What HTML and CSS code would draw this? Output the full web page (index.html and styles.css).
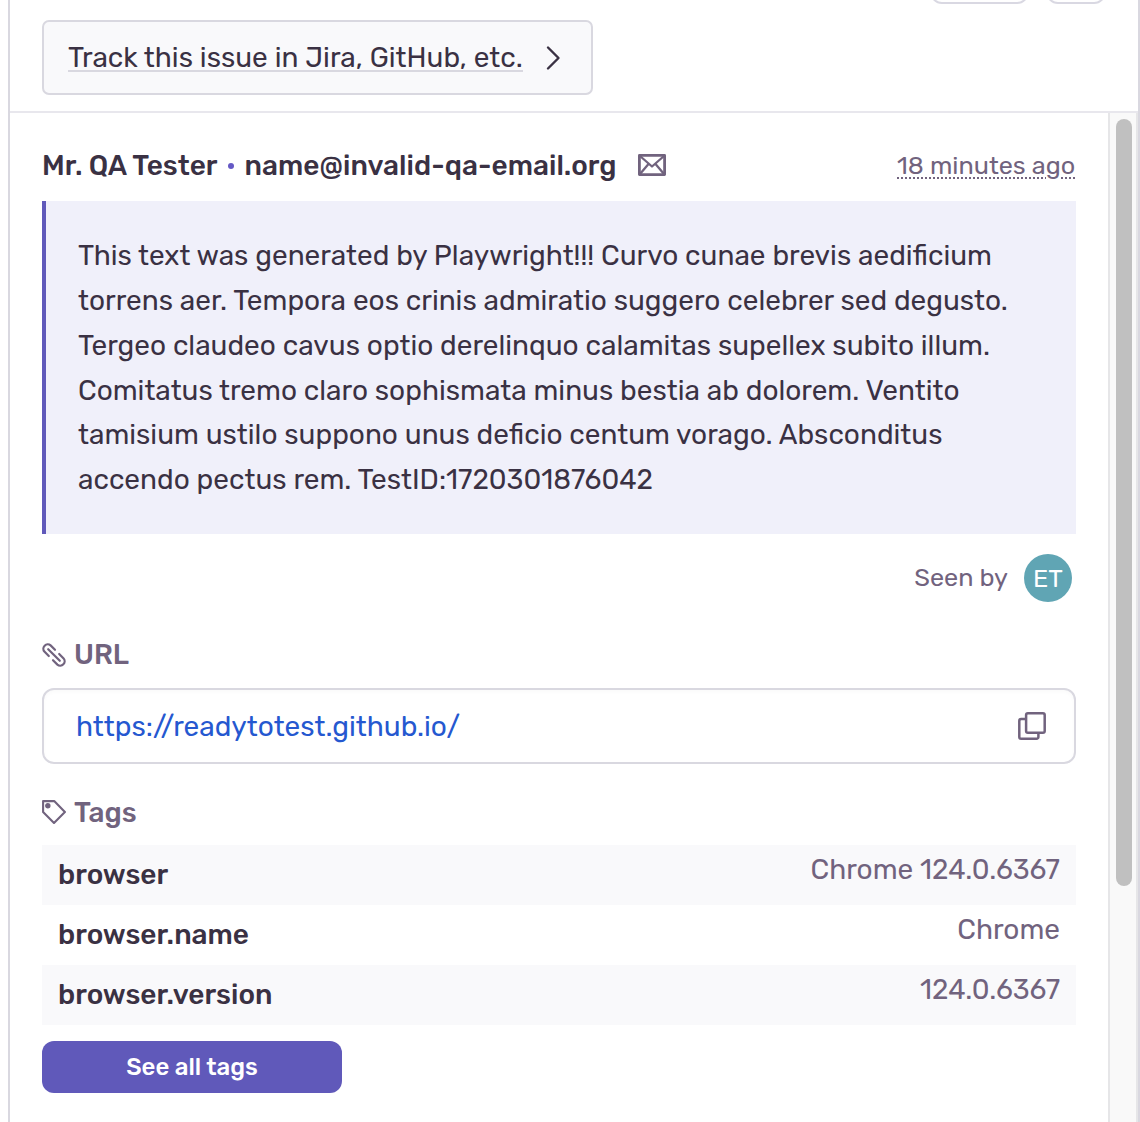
FILE: index.html
```html
<!DOCTYPE html>
<html lang="en">
<head>
<meta charset="utf-8">
<title>User Feedback</title>
<link rel="stylesheet" href="styles.css">
</head>
<body>
<div class="panel">
  <header class="header">
    <div class="actions"><span class="action action-wide"></span><span class="action"></span></div>
    <a class="track"><span class="track-label">Track this issue in Jira, GitHub, etc.</span>
      <svg class="chevron" width="16" height="28" viewBox="0 0 16 28" fill="none" stroke="#3a3143" stroke-width="2.4" stroke-linecap="round" stroke-linejoin="round"><path d="M2 3.500 12.500 14 2 24.500"/></svg>
    </a>
  </header>
  <div class="body">
    <main class="content">
      <div class="author">
        <span class="name">Mr. QA Tester</span><span class="dot"></span><span class="email">name@invalid-qa-email.org</span>
        <svg class="mail" width="28" height="22" viewBox="0 0 28 22" fill="none" stroke="#71637e" stroke-width="2.800" stroke-linejoin="round"><path d="M1.400 1.400H26.600V20.600H1.400Z"/><path stroke-width="2.300" d="M2 2 14 12.500 26 2M2 20 10.500 10M26 20 17.500 10"/></svg>
        <span class="time">18 minutes ago</span>
      </div>
      <blockquote class="message">This text was generated by Playwright!!! Curvo cunae brevis aedificium torrens aer. Tempora eos crinis admiratio suggero celebrer sed degusto. Tergeo claudeo cavus optio derelinquo calamitas supellex subito illum. Comitatus tremo claro sophismata minus bestia ab dolorem. Ventito tamisium ustilo suppono unus deficio centum vorago. Absconditus accendo pectus rem. TestID:1720301876042</blockquote>
      <div class="seen"><span class="seen-label">Seen by</span><span class="avatar">ET</span></div>
      <h2 class="heading">
        <svg width="24" height="24" viewBox="0 0 24 24" fill="none" stroke="#71637e" stroke-width="2.200" stroke-linecap="round"><path d="M6.800 13 2.400 8.600A4.400 4.400 0 0 1 8.600 2.400L13 6.800M6.200 6.200 17.800 17.800M17.200 11 21.600 15.400A4.400 4.400 0 0 1 15.400 21.600L11 17.200"/></svg>
        <span>URL</span>
      </h2>
      <div class="url-box"><a class="url">https://readytotest.github.io/</a>
        <svg width="28" height="28" viewBox="0 0 28 28" fill="none" stroke="#71637e" stroke-width="2.500" stroke-linejoin="round"><rect x="8.100" y="1.300" width="18.600" height="19.500" rx="1.800"/><path d="M8 7.100H3.100A1.800 1.800 0 0 0 1.300 8.900V24.900A1.800 1.800 0 0 0 3.100 26.700H18.600A1.800 1.800 0 0 0 20.400 24.900V21"/></svg>
      </div>
      <h2 class="heading heading-tags">
        <svg width="24" height="24" viewBox="0 0 24 24" fill="none" stroke="#71637e" stroke-width="2.100" stroke-linejoin="round"><path d="M1.100 1.100H12.200L22.900 12 12 22.900 1.100 12Z"/><circle cx="5.800" cy="5.800" r="1.700" fill="#71637e"/></svg>
        <span class="h-tags">Tags</span>
      </h2>
      <div class="tags">
        <div class="tag"><span class="key">browser</span><span class="value">Chrome 124.0.6367</span></div>
        <div class="tag"><span class="key">browser.name</span><span class="value">Chrome</span></div>
        <div class="tag"><span class="key">browser.version</span><span class="value">124.0.6367</span></div>
      </div>
      <a class="button">See all tags</a>
    </main>
    <div class="scrollbar"><div class="thumb"></div></div>
  </div>
</div>
</body>
</html>
```
FILE: styles.css
```css
* { box-sizing: border-box; }
body {
  margin: 0;
  height: 1122px;
  overflow: hidden;
  background: #fff;
  color: #3a3143;
  font: 400 28px/44.8px Rubik, Roboto, sans-serif;
}
.panel {
  display: flex;
  flex-direction: column;
  height: 1122px;
  margin-left: 8px;
  border: solid #d9d8e0;
  border-width: 0 2px;
}
.header { height: 113px; padding: 0 32px; border-bottom: 2px solid #e8e7ed; }
.actions { display: flex; justify-content: flex-end; align-items: flex-end; gap: 17px; height: 4px; margin-bottom: 16px; overflow: hidden; }
.action { flex: none; width: 60px; height: 40px; border: 2px solid #d9d8e2; border-radius: 12px; }
.action-wide { width: 99px; }
.track {
  display: flex;
  align-items: center;
  width: 551px;
  height: 75px;
  padding-left: 24px;
  background: #f9f9fb;
  border: 2px solid #d9d8e0;
  border-radius: 7px;
}
.track-label { width: 455px; height: 29px; line-height: 29px; border-bottom: 2px solid #d9d8e0; white-space: nowrap; letter-spacing: .02px; }
.chevron { margin-left: 23px; }
.body { display: flex; flex: 1; min-height: 0; }
.content { flex: 1; padding: 30px 32px 0; overflow: hidden; }
.author { display: flex; align-items: center; height: 46px; margin-bottom: 12px; font-weight: 500; white-space: nowrap; }
.name { width: 175px; }
.dot { width: 6px; height: 6px; margin: 0 10.5px 0 11px; border-radius: 50%; background: #6559c5; }
.email { width: 371.5px; letter-spacing: .04px; }
.mail { margin: -2px 0 0 22px; }
.time {
  width: 179px;
  height: 26px;
  margin: -2px 0 0 auto;
  color: #71637e;
  font-weight: 400;
  font-size: 25.2px;
  line-height: 26px;
  text-decoration: underline dotted 2px;
  text-underline-offset: 3px;
}
.message { height: 333px; margin: 0; padding: 33.3px 32px 30px; background: #f0f0fa; border-left: 4px solid #6059ba; }
.seen { display: flex; justify-content: flex-end; align-items: center; height: 48px; margin: 20px 4px 0 0; color: #71637e; font-size: 25.2px; }
.seen-label { margin: -2px 16px 0 0; }
.avatar { width: 48px; height: 48px; border-radius: 50%; background: #60a5b4; color: #fff; line-height: 48px; text-align: center; }
.heading { display: flex; align-items: center; height: 34px; margin: 36px 0 16px; gap: 8px; color: #71637e; font-size: 28px; font-weight: 500; }
.url-box {
  display: flex;
  align-items: center;
  justify-content: space-between;
  height: 76px;
  padding: 0 28px 0 32px;
  border: 2px solid #d9d8e0;
  border-radius: 12px;
  box-shadow: inset 0 2px 4px #2b223306;
}
.url { color: #2558d0; padding-top: 2px; }
.heading-tags { margin: 31px 0 16px; }
.h-tags { padding-top: 2px; }
.tag { display: flex; justify-content: space-between; height: 60px; padding: 0 16px; }
.tag:nth-child(odd) { background: #f9f9fb; }
.key { font-weight: 500; line-height: 60px; }
.value { color: #71637e; line-height: 50px; }
.button {
  display: block;
  width: 300px;
  height: 52px;
  margin-top: 16px;
  border-radius: 12px;
  background: #6059ba;
  color: #fff;
  font-size: 24px;
  font-weight: 500;
  line-height: 52px;
  text-align: center;
}
.scrollbar { width: 30px; padding: 6px 4px 0 6px; background: #f9f9f9; border: solid #e6e6e8; border-width: 0 2px; }
.thumb { width: 16px; height: 767px; border-radius: 8px; background: #c0c0c0; }
```
